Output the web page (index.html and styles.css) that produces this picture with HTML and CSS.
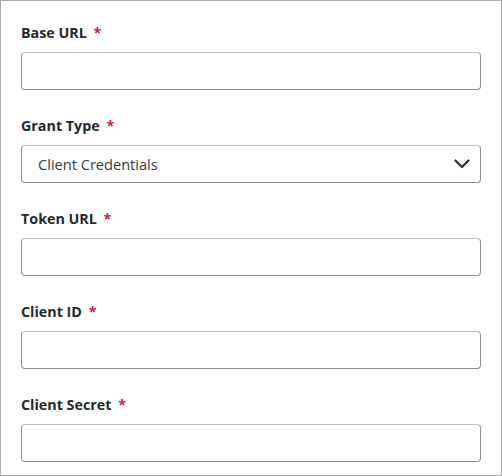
FILE: index.html
```html
<!DOCTYPE html>
<html lang="en">
<head>
  <meta charset="UTF-8">
  <meta name="viewport" content="width=device-width, initial-scale=1.0">
  <title>Connection Settings</title>
  <link rel="stylesheet" href="styles.css">
</head>
<body>
  <form class="settings-form">
    <div class="field">
      <label for="baseUrl">Base URL <span class="required">*</span></label>
      <input type="text" id="baseUrl" class="text-input">
    </div>

    <div class="field">
      <label for="grantType">Grant Type <span class="required">*</span></label>
      <div class="select-wrap">
        <select id="grantType" class="select-input">
          <option>Client Credentials</option>
        </select>
        <svg class="chevron" width="16" height="10" viewBox="0 0 16 10">
          <path d="M1.5 1.5 L8 8 L14.5 1.5" fill="none" stroke="#2b2f33" stroke-width="2.2" stroke-linecap="round" stroke-linejoin="round"/>
        </svg>
      </div>
    </div>

    <div class="field">
      <label for="tokenUrl">Token URL <span class="required">*</span></label>
      <input type="text" id="tokenUrl" class="text-input">
    </div>

    <div class="field">
      <label for="clientId">Client ID <span class="required">*</span></label>
      <input type="text" id="clientId" class="text-input">
    </div>

    <div class="field">
      <label for="clientSecret">Client Secret <span class="required">*</span></label>
      <input type="password" id="clientSecret" class="text-input">
    </div>
  </form>
</body>
</html>
```

FILE: styles.css
```css
body {
  margin: 0;
  padding: 0;
  background-color: #fff;
  font-family: "Open Sans", Arial, sans-serif;
}

.settings-form {
  box-sizing: border-box;
  width: 502px;
  height: 476px;
  overflow: hidden;
  border: 1px solid #ababab;
  padding: 22px 20px 0;
  display: flex;
  flex-direction: column;
  gap: 26px;
}

.field {
  display: flex;
  flex-direction: column;
  gap: 9px;
}

.field label {
  font-size: 14.3px;
  font-weight: 700;
  line-height: 20px;
  color: #23292f;
}

.required {
  color: #d4144a;
  margin-left: 3px;
}

.text-input,
.select-input {
  box-sizing: border-box;
  width: 100%;
  height: 38px;
  margin: 0;
  border: 1px solid #86909a;
  border-top-color: #b9bec3;
  border-radius: 4px;
  background: #fff;
  font-family: inherit;
  font-size: 14.6px;
  color: #333a40;
}

.select-wrap {
  position: relative;
}

.select-input {
  appearance: none;
  padding: 0 40px 0 16px;
}

.chevron {
  position: absolute;
  right: 11px;
  top: 14px;
  pointer-events: none;
}
```
